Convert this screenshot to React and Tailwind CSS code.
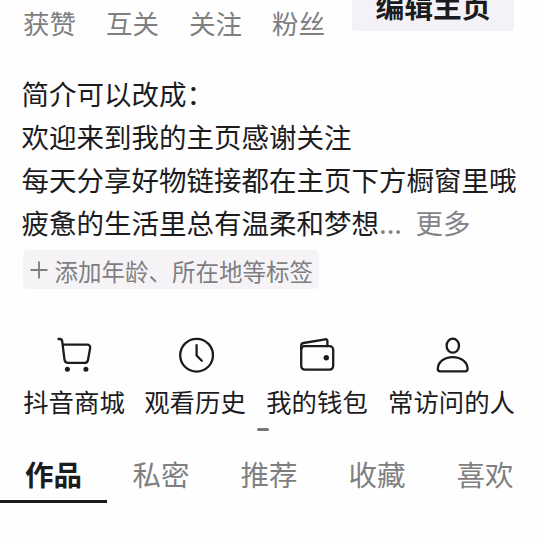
const stats = [
  { label: '获赞', pos: 'ml-[23px]' },
  { label: '互关', pos: 'ml-[30px]' },
  { label: '关注', pos: 'ml-[30px]' },
  { label: '粉丝', pos: 'ml-[30px]' },
];

const tabs = ['作品', '私密', '推荐', '收藏', '喜欢'];

function CartIcon() {
  return (
    <svg width="38" height="38" viewBox="0 0 38 38" fill="none" stroke="#1c1c1e" strokeWidth="2.3" strokeLinecap="round" strokeLinejoin="round">
      <path d="M3.500 3h1.200c1.500 0 2.300.8 2.500 2.200L9.500 23.600c.3 2.200 1.500 3.300 3.600 3.300h16.400c2 0 3.100-1 3.500-3l2.100-11.600c.4-2.200-.8-3.700-3-3.700H7.900" />
      <circle cx="12.400" cy="33.300" r="2.500" fill="#1c1c1e" stroke="none" />
      <circle cx="30.900" cy="33.300" r="2.500" fill="#1c1c1e" stroke="none" />
    </svg>
  );
}

function ClockIcon() {
  return (
    <svg width="38" height="38" viewBox="0 0 38 38" fill="none" stroke="#1c1c1e" strokeWidth="2.3" strokeLinecap="round" strokeLinejoin="round">
      <circle cx="20.600" cy="19.200" r="16.400" />
      <path d="M20.600 9.200v10.300l5.200 5.200" />
    </svg>
  );
}

function WalletIcon() {
  return (
    <svg width="38" height="38" viewBox="0 0 38 38" fill="none" stroke="#1c1c1e" strokeWidth="2.3" strokeLinecap="round" strokeLinejoin="round">
      <rect x="3.200" y="10.200" width="32" height="23.500" rx="3.600" />
      <path d="M3.200 13V9.500c0-1.400.9-2.300 2.300-2.500l21.700-3.700c1.300-.2 2.200.5 2.200 1.800v5" />
      <circle cx="28.300" cy="21.700" r="2.700" fill="#1c1c1e" stroke="none" />
    </svg>
  );
}

function PersonIcon() {
  return (
    <svg width="38" height="38" viewBox="0 0 38 38" fill="none" stroke="#1c1c1e" strokeWidth="2.3" strokeLinecap="round" strokeLinejoin="round">
      <ellipse cx="19.800" cy="9.700" rx="6.200" ry="7" />
      <path d="M7.100 35.400c-1.500 0-2.300-.8-2.300-2.300 0-7.300 6.700-12 14.900-12s14.900 4.700 14.900 12c0 1.500-.8 2.300-2.300 2.300z" />
    </svg>
  );
}

const shortcuts = [
  { label: '抖音商城', Icon: CartIcon, pos: 'ml-[23px] w-[102px]' },
  { label: '观看历史', Icon: ClockIcon, pos: 'ml-[19px] w-[102px]' },
  { label: '我的钱包', Icon: WalletIcon, pos: 'ml-5 w-[102px]' },
  { label: '常访问的人', Icon: PersonIcon, pos: 'ml-5 w-[127px]' },
];

export default function App() {
  return (
    <div
      lang="zh-CN"
      className="flex h-[539px] w-[539px] flex-col overflow-hidden bg-[#fefefe] font-['Noto_Sans_CJK_SC',sans-serif] whitespace-nowrap text-[#1c1c1e]"
    >
      <header className="flex h-[72px] shrink-0 items-start">
        {stats.map(({ label, pos }) => (
          <span key={label} className={`${pos} w-[53px] pt-0.5 text-[26.5px] leading-[42px] text-[#7f7f82]`}>
            {label}
          </span>
        ))}
        <button className="ml-[27px] flex h-[31px] w-[162px] items-end justify-center rounded-b-[3px] bg-[#f5f2f7] text-[28.8px] leading-[50px] font-bold">
          编辑主页
        </button>
      </header>

      <section className="shrink-0 pl-[21.5px] text-[27.5px] leading-[43px]">
        <p>简介可以改成：</p>
        <p>欢迎来到我的主页感谢关注</p>
        <p>每天分享好物链接都在主页下方橱窗里哦</p>
        <p>
          疲惫的生活里总有温柔和梦想
          <span className="text-[#7f7f82]">...</span>
          <span className="ml-[13.5px] text-[#858587]">更多</span>
        </p>
      </section>

      <button className="mt-1.5 ml-[23px] flex h-[39px] w-[296px] shrink-0 items-center rounded-[5px] bg-[#f6f3f7] pl-[7px] text-[23.5px] text-[#7f7f82]">
        <svg width="18" height="18" viewBox="0 0 18 18" stroke="#7f7f82" strokeWidth="1.900">
          <path d="M0.500 9h17M9 0.500v17" />
        </svg>
        <span className="ml-[6.5px] pt-[3px] leading-[36px]">添加年龄、所在地等标签</span>
      </button>

      <nav className="mt-[47px] flex shrink-0">
        {shortcuts.map(({ label, Icon, pos }) => (
          <div key={label} className={`${pos} flex flex-col items-center`}>
            <Icon />
            <span className="mt-[7px] text-[25.4px] leading-[40px]">{label}</span>
          </div>
        ))}
      </nav>

      <div className="mt-[7px] ml-[257px] h-[3px] w-3 shrink-0 rounded-full bg-[#77777a]" />

      <div className="mt-4 flex shrink-0">
        {tabs.map((tab, i) => (
          <div
            key={tab}
            className={
              i === 0
                ? 'h-14 w-[107px] border-b-[3px] border-[#1c1c1e] text-center text-[28.5px] leading-[54px] font-bold'
                : 'w-[108px] text-center text-[28.5px] leading-[54px] text-[#7f7f82]'
            }
          >
            {tab}
          </div>
        ))}
      </div>
    </div>
  );
}
